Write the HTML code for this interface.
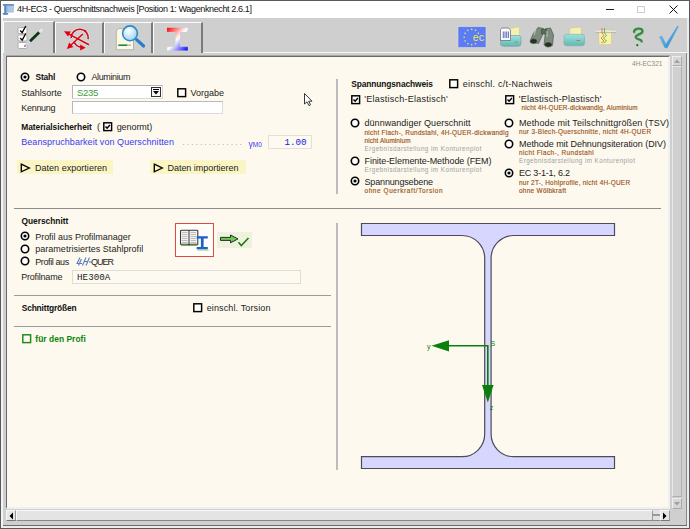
<!DOCTYPE html><html><head><meta charset="utf-8"><title>4H-EC3</title><style>
*{margin:0;padding:0;box-sizing:border-box}
html,body{width:690px;height:529px;overflow:hidden;background:#d4d4d4}
body{position:relative;font-family:"Liberation Sans",sans-serif}
.r{position:absolute}
.t,.b,.s,.m,.g{position:absolute;white-space:nowrap;line-height:12px}
.t{font-size:9px;color:#1c1c1c}
.b{font-size:8.4px;font-weight:bold;color:#111}
.s{font-size:6.4px;color:#9a5420;font-weight:normal;-webkit-text-stroke:0.15px #9a5420}
.g{font-size:6.3px;color:#a0a0a0}
.m{font-family:"Liberation Mono",monospace;font-size:9.2px;color:#222}
</style></head><body>
<div class="r" style="left:0px;top:0px;width:690px;height:529px;background:#cfcfcf;border:1px solid #5a5a5a"></div>
<div class="r" style="left:1px;top:1px;width:688px;height:17px;background:#fff"></div>
<svg class="r" style="left:2px;top:3px" width="14" height="13" viewBox="0 0 14 13"><rect x="4.6" y="1" width="7.2" height="8.5" fill="#9cbce0"/><g stroke="#c8dcf0" stroke-width="0.7"><path d="M6.5 4 H11 M6.5 6 H11 M6.5 8 H11"/></g><rect x="0.8" y="1" width="11" height="1.8" fill="#6a94c8"/><rect x="2.2" y="1" width="2.4" height="10.7" fill="#5a88c0"/><rect x="0.8" y="10" width="5.3" height="1.7" fill="#5a88c0"/></svg>
<div class="t" style="left:17px;top:3px;letter-spacing:-0.372px;color:#111;font-size:9px">4H-EC3 - Querschnittsnachweis [Position 1: Wagenknecht 2.6.1]</div>
<div class="r" style="left:606px;top:9px;width:8px;height:1px;background:#222"></div>
<div class="r" style="left:637px;top:6px;width:8px;height:7px;border:1px solid #cdcdcd"></div>
<svg class="r" style="left:669px;top:5px" width="9" height="9" viewBox="0 0 9 9"><path d="M0.5 0.5 L8.5 8.5 M8.5 0.5 L0.5 8.5" stroke="#111" stroke-width="1"/></svg>
<div class="r" style="left:1px;top:18px;width:688px;height:35px;background:#cfcfcf"></div>
<div class="r" style="left:1px;top:18px;width:2px;height:510px;background:#f4f4f4"></div>
<div class="r" style="left:55px;top:52px;width:632px;height:1px;background:#f6f6f6"></div>
<div class="r" style="left:686px;top:53px;width:1px;height:472px;background:#888"></div>
<div class="r" style="left:687px;top:18px;width:2px;height:510px;background:#ececec"></div>
<div class="r" style="left:3px;top:525px;width:684px;height:1px;background:#6a6a6a"></div>
<div class="r" style="left:1px;top:526px;width:688px;height:2px;background:#ececec"></div>
<div class="r" style="left:3px;top:21px;width:52px;height:32px;background:#cfcfcf;border-left:1px solid #fafafa;border-top:1px solid #fafafa;border-right:2px solid #7a7a7a"></div>
<div class="r" style="left:55px;top:22px;width:49px;height:31px;background:#cfcfcf;border-left:1px solid #fafafa;border-top:1px solid #fafafa;border-right:2px solid #7a7a7a"></div>
<div class="r" style="left:104px;top:22px;width:49px;height:31px;background:#cfcfcf;border-left:1px solid #fafafa;border-top:1px solid #fafafa;border-right:2px solid #7a7a7a"></div>
<div class="r" style="left:153px;top:22px;width:50px;height:31px;background:#cfcfcf;border-left:1px solid #fafafa;border-top:1px solid #fafafa;border-right:2px solid #7a7a7a"></div>
<div class="r" style="left:6px;top:56px;width:664px;height:453px;background:#fdf9ee;border-left:1px solid #6a6a6a;border-top:1px solid #6a6a6a;border-right:2px solid #f0f0f0;border-bottom:2px solid #f0f0f0"></div>
<div class="r" style="left:6px;top:55px;width:664px;height:1px;background:#a8a8a8"></div>
<div class="r" style="left:672px;top:56px;width:10px;height:453px;background:#cfcfcf"></div>
<div class="r" style="left:672px;top:56px;width:10px;height:10px;background:#d6d6d6;border:1px solid #eee;border-right-color:#aaa;border-bottom-color:#aaa"></div>
<svg class="r" style="left:673px;top:58px" width="8" height="6"><path d="M1 5 L4 1.5 L7 5Z" fill="#a0a0a0"/></svg>
<div class="r" style="left:672px;top:498px;width:10px;height:11px;background:#d6d6d6;border:1px solid #eee;border-right-color:#aaa;border-bottom-color:#aaa"></div>
<svg class="r" style="left:673px;top:501px" width="8" height="6"><path d="M1 1 L4 4.5 L7 1Z" fill="#a0a0a0"/></svg>
<div class="r" style="left:672px;top:66px;width:10px;height:431px;background:#d0d0d0;border:1px solid #e8e8e8;border-right-color:#b0b0b0;border-bottom-color:#b0b0b0"></div>
<div class="r" style="left:6px;top:510px;width:664px;height:11px;background:#e2e2e2;border-bottom:1px solid #8a8a8a"></div>
<div class="r" style="left:6px;top:510px;width:10px;height:11px;background:#e6e6e6;border:1px solid #f8f8f8;border-right-color:#999;border-bottom-color:#777"></div>
<svg class="r" style="left:8px;top:512px" width="6" height="8"><path d="M5 0.5 L1.5 4 L5 7.5Z" fill="#000"/></svg>
<div class="r" style="left:16px;top:510px;width:637px;height:11px;background:#e4e4e4;border:1px solid #fafafa;border-right-color:#999;border-bottom-color:#888"></div>
<div class="r" style="left:653px;top:514px;width:7px;height:2px;background:#999"></div>
<div class="r" style="left:660px;top:510px;width:10px;height:11px;background:#e6e6e6;border:1px solid #f8f8f8;border-right-color:#999;border-bottom-color:#777"></div>
<svg class="r" style="left:662px;top:512px" width="6" height="8"><path d="M1 0.5 L4.5 4 L1 7.5Z" fill="#000"/></svg>
<div class="g" style="left:631.5px;top:58px;font-size:8px;color:#8c8c8c;transform:scaleX(0.815);transform-origin:0 0">4H-EC321</div>
<svg class="r" style="left:20px;top:72px" width="10" height="10" viewBox="0 0 10 10"><circle cx="5" cy="5" r="3.7" fill="#fff" stroke="#000" stroke-width="1.6"/><circle cx="5" cy="5" r="1.6" fill="#000"/></svg>
<div class="b" style="left:35.5px;top:71px;letter-spacing:-0.171px;">Stahl</div>
<svg class="r" style="left:76px;top:72px" width="10" height="10" viewBox="0 0 10 10"><circle cx="5" cy="5" r="3.7" fill="#fff" stroke="#000" stroke-width="1.6"/></svg>
<div class="t" style="left:91.5px;top:71px;letter-spacing:-0.389px;">Aluminium</div>
<div class="t" style="left:21.3px;top:87px;letter-spacing:-0.003px;">Stahlsorte</div>
<div class="r" style="left:72px;top:85px;width:91px;height:14px;background:#fff;border:1px solid #b4b4b4;border-right-color:#d8d8d8;border-bottom-color:#d8d8d8"></div>
<div class="t" style="left:77px;top:87px;letter-spacing:-0.296px;color:#3a9c3a;font-size:9.5px">S235</div>
<svg class="r" style="left:151px;top:87px" width="10" height="10" viewBox="0 0 10 10"><rect x="0.5" y="0.5" width="9" height="9" fill="#f4f4f4" stroke="#333" stroke-width="1"/><path d="M2 4 L8 4 L5 7.5Z" fill="#000"/><rect x="2" y="2" width="6" height="1" fill="#000"/></svg>
<svg class="r" style="left:176.5px;top:88px" width="10" height="10" viewBox="0 0 10 10"><rect x="0.8" y="0.8" width="7.8" height="7.8" fill="#fffdf6" stroke="#000" stroke-width="1.45"/></svg>
<div class="t" style="left:190.5px;top:87px;letter-spacing:-0.005px;">Vorgabe</div>
<div class="t" style="left:21.2px;top:102px;letter-spacing:-0.274px;">Kennung</div>
<div class="r" style="left:72px;top:101px;width:151px;height:13px;background:#fff;border:1px solid #b8b8b8;border-right-color:#dcdcdc;border-bottom-color:#dcdcdc"></div>
<div class="b" style="left:21.2px;top:121px;letter-spacing:-0.031px;">Materialsicherheit</div>
<div class="t" style="left:97px;top:121px;">(</div>
<svg class="r" style="left:103px;top:122px" width="10" height="10" viewBox="0 0 10 10"><rect x="0.8" y="0.8" width="7.8" height="7.8" fill="#fffdf6" stroke="#000" stroke-width="1.45"/><path d="M2.5 4.6 L4.1 6.3 L6.9 3" fill="none" stroke="#000" stroke-width="1.4"/></svg>
<div class="t" style="left:116.7px;top:121px;letter-spacing:-0.074px;">genormt)</div>
<div class="t" style="left:21.2px;top:136px;letter-spacing:0.062px;color:#3a3af2">Beanspruchbarkeit von Querschnitten</div>
<div class="t" style="left:182.5px;top:137px;color:#808080;font-size:7px;letter-spacing:0.26px">. . . . . . . . . . . . . .</div>
<div class="t" style="left:248.5px;top:137.5px;color:#3a3af2;font-size:8.5px">γ<span style="font-size:6.5px;letter-spacing:0.2px">M0</span></div>
<div class="r" style="left:268px;top:135px;width:44px;height:14px;background:#fdfaf2;border:1px solid #e4e0d4"></div>
<div class="m" style="left:284.5px;top:137px;color:#2020e0">1.00</div>
<div class="r" style="left:17px;top:160px;width:96px;height:14px;background:#fbf5c6"></div>
<svg class="r" style="left:20px;top:163px" width="11" height="10" viewBox="0 0 11 10"><path d="M1.3 1.2 L9.3 5 L1.3 8.8Z" fill="none" stroke="#000" stroke-width="1.35"/></svg>
<div class="t" style="left:35px;top:162px;letter-spacing:0.028px;">Daten exportieren</div>
<div class="r" style="left:150px;top:160px;width:96px;height:14px;background:#fbf5c6"></div>
<svg class="r" style="left:153px;top:163px" width="11" height="10" viewBox="0 0 11 10"><path d="M1.3 1.2 L9.3 5 L1.3 8.8Z" fill="none" stroke="#000" stroke-width="1.35"/></svg>
<div class="t" style="left:167.5px;top:162px;letter-spacing:-0.034px;">Daten importieren</div>
<div class="r" style="left:336px;top:79px;width:2px;height:115px;background:#bcbcbc"></div>
<div class="r" style="left:14px;top:208px;width:647px;height:1px;background:#8c8c8c"></div>
<div class="r" style="left:336px;top:223px;width:2px;height:247px;background:#bcbcbc"></div>
<div class="r" style="left:14px;top:295px;width:317px;height:1px;background:#9c9c9c"></div>
<div class="r" style="left:14px;top:326px;width:317px;height:1px;background:#9c9c9c"></div>
<div class="b" style="left:351.2px;top:78px;letter-spacing:-0.101px;">Spannungsnachweis</div>
<svg class="r" style="left:448.5px;top:79px" width="10" height="10" viewBox="0 0 10 10"><rect x="0.8" y="0.8" width="7.8" height="7.8" fill="#fffdf6" stroke="#000" stroke-width="1.45"/></svg>
<div class="t" style="left:462.8px;top:78px;letter-spacing:0.243px;">einschl. c/t-Nachweis</div>
<svg class="r" style="left:350.5px;top:94.5px" width="10" height="10" viewBox="0 0 10 10"><rect x="0.8" y="0.8" width="7.8" height="7.8" fill="#fffdf6" stroke="#000" stroke-width="1.45"/><path d="M2.5 4.6 L4.1 6.3 L6.9 3" fill="none" stroke="#000" stroke-width="1.4"/></svg>
<div class="t" style="left:364.3px;top:93px;letter-spacing:0.252px;">&#39;Elastisch-Elastisch&#39;</div>
<svg class="r" style="left:504.5px;top:94.5px" width="10" height="10" viewBox="0 0 10 10"><rect x="0.8" y="0.8" width="7.8" height="7.8" fill="#fffdf6" stroke="#000" stroke-width="1.45"/><path d="M2.5 4.6 L4.1 6.3 L6.9 3" fill="none" stroke="#000" stroke-width="1.4"/></svg>
<div class="t" style="left:518.8px;top:93px;letter-spacing:0.212px;">&#39;Elastisch-Plastisch&#39;</div>
<div class="s" style="left:521.6px;top:102px;letter-spacing:0.153px;">nicht 4H-QUER-dickwandig, Aluminium</div>
<svg class="r" style="left:350px;top:118px" width="10" height="10" viewBox="0 0 10 10"><circle cx="5" cy="5" r="3.7" fill="#fff" stroke="#000" stroke-width="1.6"/></svg>
<div class="t" style="left:364.5px;top:117px;letter-spacing:0.040px;">dünnwandiger Querschnitt</div>
<div class="s" style="left:364.5px;top:127px;letter-spacing:0.299px;">nicht Flach-, Rundstahl, 4H-QUER-dickwandig</div>
<div class="s" style="left:364.5px;top:135px;letter-spacing:0.088px;">nicht Aluminium</div>
<div class="g" style="left:364.5px;top:143px;letter-spacing:0.455px;">Ergebnisdarstellung im Konturenplot</div>
<svg class="r" style="left:350px;top:156px" width="10" height="10" viewBox="0 0 10 10"><circle cx="5" cy="5" r="3.7" fill="#fff" stroke="#000" stroke-width="1.6"/></svg>
<div class="t" style="left:364.5px;top:155px;letter-spacing:-0.055px;">Finite-Elemente-Methode (FEM)</div>
<div class="g" style="left:364.5px;top:164px;letter-spacing:0.455px;">Ergebnisdarstellung im Konturenplot</div>
<svg class="r" style="left:350px;top:176px" width="10" height="10" viewBox="0 0 10 10"><circle cx="5" cy="5" r="3.7" fill="#fff" stroke="#000" stroke-width="1.6"/><circle cx="5" cy="5" r="1.6" fill="#000"/></svg>
<div class="t" style="left:364.5px;top:176px;letter-spacing:-0.160px;">Spannungsebene</div>
<div class="s" style="left:364.5px;top:185px;letter-spacing:0.618px;">ohne Querkraft/Torsion</div>
<svg class="r" style="left:504px;top:118px" width="10" height="10" viewBox="0 0 10 10"><circle cx="5" cy="5" r="3.7" fill="#fff" stroke="#000" stroke-width="1.6"/></svg>
<div class="t" style="left:519px;top:117px;letter-spacing:0.121px;">Methode mit Teilschnittgrößen (TSV)</div>
<div class="s" style="left:519px;top:126px;letter-spacing:0.352px;">nur 3-Blech-Querschnitte, nicht 4H-QUER</div>
<svg class="r" style="left:504px;top:139px" width="10" height="10" viewBox="0 0 10 10"><circle cx="5" cy="5" r="3.7" fill="#fff" stroke="#000" stroke-width="1.6"/></svg>
<div class="t" style="left:519px;top:138px;letter-spacing:-0.046px;">Methode mit Dehnungsiteration (DIV)</div>
<div class="s" style="left:519px;top:147px;letter-spacing:0.420px;">nicht Flach-, Rundstahl</div>
<div class="g" style="left:519px;top:155px;letter-spacing:0.426px;">Ergebnisdarstellung im Konturenplot</div>
<svg class="r" style="left:504px;top:168px" width="10" height="10" viewBox="0 0 10 10"><circle cx="5" cy="5" r="3.7" fill="#fff" stroke="#000" stroke-width="1.6"/><circle cx="5" cy="5" r="1.6" fill="#000"/></svg>
<div class="t" style="left:519px;top:167px;letter-spacing:-0.211px;">EC 3-1-1, 6.2</div>
<div class="s" style="left:519px;top:177px;letter-spacing:0.267px;">nur 2T-, Hohlprofile, nicht 4H-QUER</div>
<div class="s" style="left:519px;top:185px;letter-spacing:0.309px;">ohne Wölbkraft</div>
<div class="b" style="left:21.5px;top:215px;letter-spacing:-0.020px;">Querschnitt</div>
<svg class="r" style="left:20px;top:231px" width="10" height="10" viewBox="0 0 10 10"><circle cx="5" cy="5" r="3.7" fill="#fff" stroke="#000" stroke-width="1.6"/><circle cx="5" cy="5" r="1.6" fill="#000"/></svg>
<div class="t" style="left:35.2px;top:231px;letter-spacing:-0.024px;">Profil aus Profilmanager</div>
<svg class="r" style="left:20px;top:244px" width="10" height="10" viewBox="0 0 10 10"><circle cx="5" cy="5" r="3.7" fill="#fff" stroke="#000" stroke-width="1.6"/></svg>
<div class="t" style="left:35.2px;top:243px;letter-spacing:0.035px;">parametrisiertes Stahlprofil</div>
<svg class="r" style="left:20px;top:256px" width="10" height="10" viewBox="0 0 10 10"><circle cx="5" cy="5" r="3.7" fill="#fff" stroke="#000" stroke-width="1.6"/></svg>
<div class="t" style="left:35.2px;top:256px;letter-spacing:-0.392px;">Profil aus</div>
<svg class="r" style="left:76px;top:257px" width="16" height="9" viewBox="0 0 16 9"><g stroke="#5a7cc4" stroke-width="1.1" fill="none"><path d="M4 0.5 L1 6.5 H6"/><path d="M5.5 2 L2.5 8.5"/><path d="M10 0.5 L6.5 8.5 M13.5 0.5 L10 8.5 M8 4.5 H12"/><path d="M13 5 H15.5"/></g></svg>
<div class="t" style="left:91px;top:256px;letter-spacing:-1.005px;">QUER</div>
<div class="t" style="left:21.2px;top:271px;letter-spacing:-0.192px;">Profilname</div>
<div class="r" style="left:72px;top:270px;width:229px;height:14px;background:#fdfaf2;border:1px solid #e2ddd0"></div>
<div class="m" style="left:77px;top:272px;letter-spacing:0.061px;">HE300A</div>
<div class="r" style="left:175px;top:223px;width:39px;height:34px;background:#fffdf8;border:1.5px solid #e04848"></div>
<svg class="r" style="left:179px;top:229px" width="32" height="22" viewBox="0 0 32 22">
<path d="M1.5 2 Q1.5 1.2 2.5 1.2 L9.2 1.2 Q10 1.2 10 2 Q10 1.2 10.8 1.2 L17.8 1.2 Q18.8 1.2 18.8 2 L18.8 15.2 L10.6 15.2 L10 16 L9.4 15.2 L1.5 15.2Z" fill="#f2f2f2" stroke="#3a3a3a" stroke-width="1.1"/>
<line x1="10" y1="2" x2="10" y2="15.5" stroke="#3a3a3a" stroke-width="1"/>
<g stroke="#a8a8a8" stroke-width="0.7"><line x1="3" y1="3.5" x2="8.5" y2="3.5"/><line x1="3" y1="5.5" x2="8.5" y2="5.5"/><line x1="3" y1="7.5" x2="8.5" y2="7.5"/><line x1="3" y1="9.5" x2="8.5" y2="9.5"/><line x1="3" y1="11.5" x2="8.5" y2="11.5"/><line x1="3" y1="13.5" x2="8.5" y2="13.5"/>
<line x1="11.5" y1="3.5" x2="17" y2="3.5"/><line x1="11.5" y1="5.5" x2="17" y2="5.5"/><line x1="11.5" y1="7.5" x2="17" y2="7.5"/><line x1="11.5" y1="9.5" x2="17" y2="9.5"/><line x1="11.5" y1="11.5" x2="17" y2="11.5"/><line x1="11.5" y1="13.5" x2="17" y2="13.5"/></g>
<line x1="2" y1="16.3" x2="18.5" y2="16.3" stroke="#5a9a3a" stroke-width="1"/>
<path d="M17.7 7.3 H28.8 V9.6 H24.6 V17.9 H28.8 V20.3 H17.7 V17.9 H21.9 V9.6 H17.7Z" fill="#1a5fd0"/>
<path d="M18.5 21 H29.5" stroke="#80c060" stroke-width="0.9"/>
</svg>
<div class="r" style="left:217px;top:232px;width:35px;height:16px;background:#eef1dc"></div>
<svg class="r" style="left:217px;top:232px" width="35" height="16" viewBox="0 0 35 16">
<path d="M3.5 5.4 H13.5 V3 L21 6.9 L13.5 10.8 V8.4 H3.5Z" fill="#6cc850" stroke="#2a2a2a" stroke-width="1" stroke-linejoin="round"/>
<path d="M21.5 10.2 L24.3 13.6 L31.5 6" fill="none" stroke="#1a7a1a" stroke-width="1.5"/>
</svg>
<div class="b" style="left:21.7px;top:302px;letter-spacing:-0.147px;">Schnittgrößen</div>
<svg class="r" style="left:192.5px;top:303px" width="10" height="10" viewBox="0 0 10 10"><rect x="0.8" y="0.8" width="7.8" height="7.8" fill="#fffdf6" stroke="#000" stroke-width="1.45"/></svg>
<div class="t" style="left:206.7px;top:302px;letter-spacing:0.128px;">einschl. Torsion</div>
<svg class="r" style="left:21.5px;top:334px" width="10" height="10" viewBox="0 0 10 10"><rect x="0.8" y="0.8" width="7.8" height="7.8" fill="#fdf9ee" stroke="#1a8a1a" stroke-width="1.45"/></svg>
<div class="b" style="left:35.3px;top:333px;letter-spacing:0.059px;color:#0c840c">für den Profi</div>
<svg class="r" style="left:355px;top:215px" width="270" height="265" viewBox="355 215 270 265">
<path d="M361.5 223.5 H614.5 V235.5 H513.8 A22.7 22.7 0 0 0 491.1 258.2 V434 A22.7 22.7 0 0 0 513.8 456.7 H614.5 V468.5 H361.5 V456.7 H462 A22.7 22.7 0 0 0 484.7 434 V258.2 A22.7 22.7 0 0 0 462 235.5 H361.5Z" fill="#d6d6ff" stroke="#4c4c58" stroke-width="1.2"/>
<g stroke="#0a800a" fill="#0a800a">
<line x1="448" y1="345.8" x2="488" y2="345.8" stroke-width="1.6"/>
<line x1="487.8" y1="345" x2="487.8" y2="386" stroke-width="1.6"/>
<path d="M431.5 345.8 L449 340.3 L449 351.5Z" stroke="none"/>
<path d="M487.8 402.5 L482 385 L493.6 385Z" stroke="none"/>
</g>
<text x="427" y="348.5" font-family="Liberation Sans" font-size="7" fill="#0a800a">y</text>
<text x="490.5" y="346" font-family="Liberation Sans" font-size="7" fill="#0a800a">S</text>
<text x="489.8" y="409.5" font-family="Liberation Sans" font-size="7" fill="#0a800a">z</text>
</svg>

<svg class="r" style="left:0;top:18px" width="690" height="34" viewBox="0 18 690 34">
<defs>
<linearGradient id="ibg" x1="0" y1="0" x2="1" y2="1"><stop offset="0" stop-color="#ff0000"/><stop offset="0.5" stop-color="#ffffff"/><stop offset="1" stop-color="#0000ff"/></linearGradient>
<radialGradient id="mag" cx="0.4" cy="0.35" r="0.7"><stop offset="0" stop-color="#ffffff"/><stop offset="1" stop-color="#9cd0ee"/></radialGradient>
<linearGradient id="teal" x1="0" y1="0" x2="0" y2="1"><stop offset="0" stop-color="#9be3df"/><stop offset="1" stop-color="#5fb8b4"/></linearGradient>
<linearGradient id="chk" x1="0" y1="0" x2="1" y2="1"><stop offset="0" stop-color="#7fd0f8"/><stop offset="1" stop-color="#1a80d0"/></linearGradient>
</defs>
<!-- tab1: checklist + pen -->
<g stroke="#a8a8a8" stroke-width="0.9" fill="#fff">
<rect x="18" y="27.5" width="9" height="6" rx="1.2"/>
<rect x="18" y="35" width="9" height="6" rx="1.2"/>
<rect x="18" y="42.5" width="9" height="6" rx="1.2"/>
</g>
<g stroke="#000" stroke-width="1.3" fill="none">
<path d="M20.2 30.5 L22.2 32.6 L25.8 26"/>
<path d="M20.2 38 L22.2 40.1 L25.8 33.5"/>
</g>
<path d="M25 46 L30.6 40.6" stroke="#d8d0f0" stroke-width="2.6"/>
<path d="M30 41.2 L39.5 32" stroke="#0a3a12" stroke-width="2.8"/>
<path d="M39.2 32.3 L42.5 29" stroke="#e4e4f4" stroke-width="2.6"/>
<path d="M24.3 46.7 L25.6 45.4" stroke="#805030" stroke-width="1.2"/>
<!-- tab2: red arrows -->
<g stroke="#d8ecec" fill="none" stroke-width="3" opacity="0.8">
<path d="M66 32.5 L89 44.7"/><path d="M82.8 34 L69.5 46.5"/><path d="M71.1 38 A8.6 8.6 0 1 1 88.2 39.2"/><path d="M73.8 41.5 Q76 46.5 81 47.3"/>
</g>
<g stroke="#e00010" fill="none" stroke-width="1.6">
<path d="M68 33.6 L89 44.7"/>
<path d="M82.8 34 L70 46"/>
<path d="M71.1 38 A8.6 8.6 0 1 1 88.2 39.2"/>
<path d="M73.8 41.5 Q76 46.5 81 47.3"/>
</g>
<g fill="#e00010">
<path d="M64 31.2 L70.8 31.4 L68 36.6Z"/>
<path d="M66.9 48.9 L69.2 42.6 L73.4 46.9Z"/>
<path d="M85.6 47.8 L80.2 44.4 L80.2 50.6Z"/>
<circle cx="85.4" cy="30.9" r="1"/>
</g>
<!-- tab3: doc + magnifier -->
<path d="M118.6 28.6 H133.5 V49.8 H116.3 V31Z" fill="#fbf9e4" stroke="#b0b0a0" stroke-width="0.9"/>
<path d="M118.3 45.2 H127.5" stroke="#1a7a3a" stroke-width="1.5"/>
<path d="M127.5 45.2 H131" stroke="#c0c0b0" stroke-width="1.5"/>
<path d="M136.6 39.6 L143.6 46" stroke="#2a7ec8" stroke-width="3.2" stroke-linecap="round"/>
<circle cx="130" cy="33.3" r="7.4" fill="url(#mag)" stroke="#2a8ad0" stroke-width="1.6"/>
<!-- tab4: gradient I beam -->
<path d="M167 27.7 H187.8 V31.9 H180 V46.8 H187.8 V50.5 H167 V46.8 H175.5 V31.9 H167Z" fill="url(#ibg)"/>
<!-- EU flag -->
<rect x="458" y="26.6" width="28" height="21" fill="#5b7cf6" stroke="#e8e0c8" stroke-width="0.6"/>
<g fill="#f4f060">
<circle cx="471.7" cy="29.3" r="0.8"/><circle cx="475.5" cy="30.3" r="0.8"/><circle cx="478.3" cy="33.2" r="0.8"/>
<circle cx="467.9" cy="30.3" r="0.8"/><circle cx="465.1" cy="33.2" r="0.8"/><circle cx="464.1" cy="37.2" r="0.8"/>
<circle cx="465.1" cy="41" r="0.8"/><circle cx="467.9" cy="43.8" r="0.8"/><circle cx="471.7" cy="44.8" r="0.8"/><circle cx="475.5" cy="43.8" r="0.8"/>
</g>
<text x="472.8" y="41.4" font-family="Liberation Sans" font-size="10.5" fill="#eef040">ec</text>
<!-- printer with doc -->
<path d="M509.5 28.5 L519.5 26.8 L519.5 35.5 L509.5 36.5Z" fill="#f6f0b0" stroke="#c8c090" stroke-width="0.5"/>
<path d="M501 35.5 H519 Q521 35.5 521 38 V43.5 Q521 46.3 518 46.3 H503.5 Q500.5 46.3 500.5 43.5Z" fill="url(#teal)" stroke="#7a9a94" stroke-width="0.6"/>
<path d="M502 28 H508.5 L510.5 30 V40.5 H500.5 V29.5Z" fill="#fbfbff" stroke="#606070" stroke-width="0.7"/>
<g stroke="#3a48a8" stroke-width="0.8"><path d="M503.3 31.5 V38 M505 31.5 V38 M506.7 31.5 V38 M508.4 31.5 V38"/></g>
<path d="M514.5 42 H518" stroke="#d06060" stroke-width="0.8"/>
<!-- binoculars -->
<g stroke="#3e4a3e" stroke-width="0.6">
<path d="M538 27.5 L543.5 28.5 L542.5 35 L538.5 43.5 L530 41.5 L533 34Z" fill="#7c8c7c"/>
<path d="M545 28.8 L550.5 28 L553.5 35 L552.5 45.5 L544 45 L545 36Z" fill="#7c8c7c"/>
<path d="M541.5 29.5 H546.5 V34 H541.5Z" fill="#5c6a5c"/>
</g>
<path d="M536 29.5 L534 35" stroke="#b8c8b8" stroke-width="1"/>
<path d="M547 31 L547 37" stroke="#b8c8b8" stroke-width="1"/>
<ellipse cx="533.6" cy="41.2" rx="3.6" ry="2.6" fill="#263026" stroke="#8a9a8a" stroke-width="0.5"/>
<ellipse cx="548.3" cy="44.6" rx="3.8" ry="2.6" fill="#263026" stroke="#8a9a8a" stroke-width="0.5"/>
<!-- printer -->
<path d="M570 28 L581 27 L581.5 35 L569.5 36Z" fill="#f6f0b0" stroke="#c8c090" stroke-width="0.5"/>
<rect x="564" y="34.3" width="20.5" height="11.5" rx="2.5" fill="url(#teal)" stroke="#8aa8a0" stroke-width="0.6"/>
<path d="M576.5 40.5 H580" stroke="#d06060" stroke-width="0.9"/>
<!-- chart paper -->
<path d="M598.5 30 H611.5 V44.5 L599 44.8Z" fill="#f8f2a8" stroke="#c8c080" stroke-width="0.5"/>
<path d="M595.5 31.6 H616" stroke="#e8e8e8" stroke-width="1.6"/>
<path d="M595.5 32.6 H616" stroke="#9a9a9a" stroke-width="0.6"/>
<path d="M602 28 V33 L604 35.5 L601 38 L604 41 L601 43" stroke="#e05050" stroke-width="0.7" fill="none"/>
<path d="M604.5 28 V33 L606.5 35.5 L603.5 38 L606.5 41 L603.5 43" stroke="#30a030" stroke-width="0.7" fill="none"/>
<!-- question mark -->
<path d="M634 32 C633.8 28 642.6 27 642.4 31.3 C642.2 34.2 635.3 34.6 635.7 37.4 C636.1 39.8 641.6 38.6 641.5 41.4" fill="none" stroke="#9aa89a" stroke-width="2.3" stroke-linecap="round" transform="translate(0.6,0.5)" opacity="0.6"/>
<path d="M634 32 C633.8 28 642.6 27 642.4 31.3 C642.2 34.2 635.3 34.6 635.7 37.4 C636.1 39.8 641.6 38.6 641.5 41.4" fill="none" stroke="#2f8c3c" stroke-width="2.2" stroke-linecap="round"/>
<circle cx="637.3" cy="45.2" r="1.1" fill="#1a6a2a"/>
<!-- blue check -->
<path d="M659.6 37 L661.7 36 L665.9 44.2 L677.6 26 L678.3 26.5 L667.3 47.8 L664.9 47.8Z" fill="url(#chk)" stroke="#2a80c8" stroke-width="0.3"/>
</svg>

<svg class="r" style="left:304px;top:93px" width="11" height="16" viewBox="0 0 11 16"><path d="M0.5 0.5 V11 L3 8.8 L4.9 12.6 L6.5 11.8 L4.7 8.2 L8 8.2Z" fill="#fff" stroke="#222" stroke-width="0.9" stroke-linejoin="round"/></svg>
</body></html>
